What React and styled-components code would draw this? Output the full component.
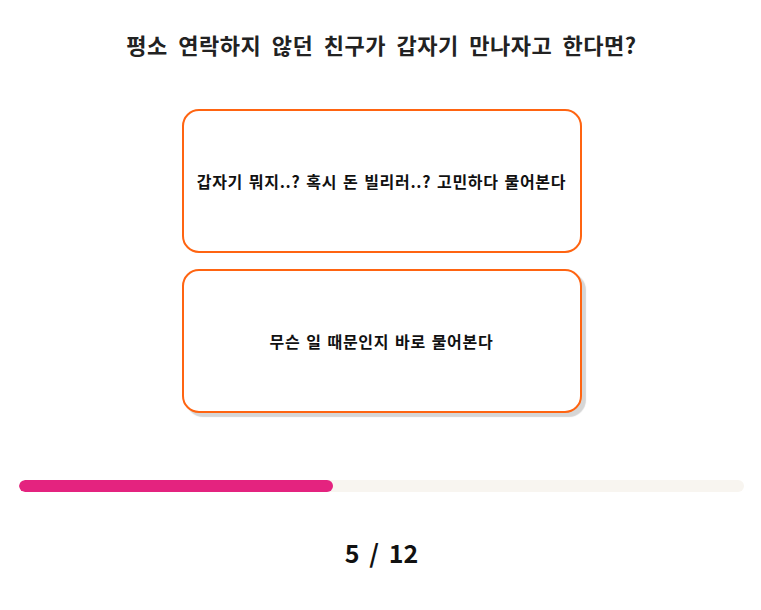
import React from "react";
import styled, { createGlobalStyle } from "styled-components";

const Global = createGlobalStyle`
  html, body { margin: 0; padding: 0; background: #ffffff; }
  body { font-family: "Noto Sans CJK KR", "Noto Sans", sans-serif; }
`;

const Page = styled.div`
  display: flex;
  flex-direction: column;
  align-items: center;
  padding: 0 17px 0 19px;
  box-sizing: border-box;
  width: 761px;
`;

const Question = styled.h1`
  margin: 27px 0 0;
  font-size: 22px;
  line-height: 34px;
  font-weight: 700;
  color: #222222;
  text-align: center;
  letter-spacing: 0.5px;
  word-spacing: 5px;
`;

const Options = styled.div`
  display: flex;
  flex-direction: column;
  gap: 16px;
  margin-top: 48px;
`;

const Option = styled.button`
  box-sizing: border-box;
  width: 400px;
  height: 144px;
  border: 2px solid #ff6411;
  border-radius: 17px;
  background: #ffffff;
  font-family: inherit;
  font-size: 16px;
  font-weight: 700;
  letter-spacing: 0.7px;
  word-spacing: 1.5px;
  color: #111111;
  display: flex;
  align-items: center;
  justify-content: center;
  padding: 0 12px;
  cursor: pointer;
  box-shadow: ${(p) => (p.$active ? "4px 4px 1px #d6d6d6" : "none")};
`;

const Track = styled.div`
  margin-top: 67px;
  align-self: stretch;
  height: 12px;
  border-radius: 6px;
  background: #f8f5f0;
  overflow: hidden;
`;

const Fill = styled.div`
  height: 100%;
  border-radius: 6px;
  background: #e4237f;
`;

const Counter = styled.div`
  margin-top: 43px;
  font-size: 25px;
  font-weight: 700;
  color: #111111;
  line-height: 34px;
  word-spacing: 4px;
`;

export default function App() {
  const current = 5;
  const total = 12;
  return (
    <>
      <Global />
      <Page>
        <Question>평소 연락하지 않던 친구가 갑자기 만나자고 한다면?</Question>
        <Options>
          <Option>갑자기 뭐지..? 혹시 돈 빌리러..? 고민하다 물어본다</Option>
          <Option $active>무슨 일 때문인지 바로 물어본다</Option>
        </Options>
        <Track>
          <Fill style={{ width: `${(314 / 725) * 100}%` }} />
        </Track>
        <Counter>
          {current} / {total}
        </Counter>
      </Page>
    </>
  );
}
